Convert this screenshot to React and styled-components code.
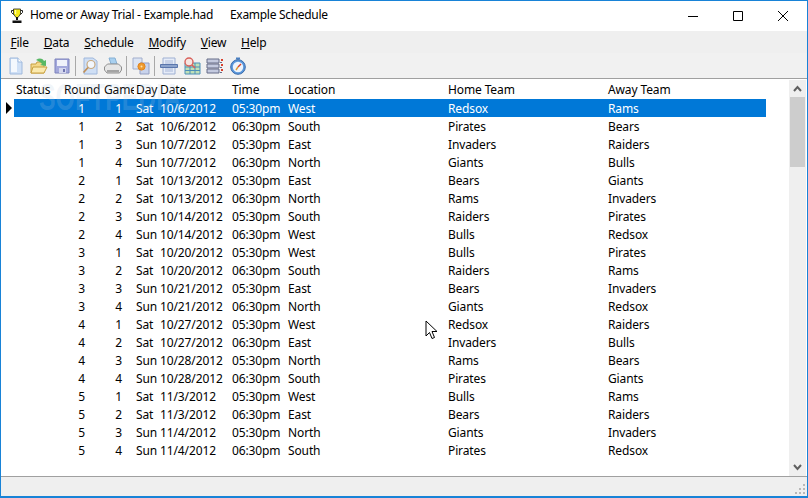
import React from 'react';
import styled, { createGlobalStyle } from 'styled-components';

const GlobalStyle = createGlobalStyle`
  html, body {
    margin: 0;
    padding: 0;
    background: #fff;
  }
  body {
    font-family: "Noto Sans", "Open Sans", sans-serif;
    font-size: 12px;
    color: #000;
    overflow: hidden;
  }
`;

const Window = styled.div`
  box-sizing: border-box;
  position: relative;
  width: 808px;
  height: 498px;
  display: flex;
  flex-direction: column;
  border: 1px solid #1883d7;
  border-width: 1px 1px 2px 1px;
  background: #f0f0f0;
  overflow: hidden;
`;

const TitleBar = styled.div`
  height: 30px;
  display: flex;
  align-items: center;
  padding-right: 2px;
  background: #fff;
  flex: none;
`;

const AppIcon = styled.svg`
  width: 16px;
  height: 16px;
  margin: 0 5px 0 8px;
  flex: none;
`;

const TitleText = styled.span`
  width: 200px;
  font-size: 12px;
  letter-spacing: -0.3px;
  line-height: 16px;
  margin-top: -2px;
  white-space: nowrap;
`;

const TitleSpacer = styled.div`
  flex: 1;
`;

const WinButton = styled.div`
  width: 45px;
  height: 30px;
  display: flex;
  align-items: center;
  justify-content: center;
`;

const MenuBar = styled.div`
  height: 22px;
  display: flex;
  align-items: center;
  padding-left: 2px;
  background: #efefef;
  flex: none;
`;

const MenuItem = styled.span`
  padding: 0 7.5px;
  font-size: 12px;
  letter-spacing: -0.25px;
`;

const ToolBar = styled.div`
  height: 25px;
  display: flex;
  align-items: center;
  padding-left: 3px;
  background: #f1f1f1;
  flex: none;
`;

const ToolButton = styled.div`
  width: 23px;
  height: 22px;
  display: flex;
  align-items: center;
  justify-content: center;
  svg {
    width: 18px;
    height: 18px;
  }
`;

const ToolSep = styled.div`
  width: 1px;
  height: 20px;
  background: #a8a8a8;
  margin: 0 ${(p) => p.$gap || 2}px;
`;

const Main = styled.div`
  flex: 1;
  min-height: 0;
  display: flex;
  position: relative;
  background: #fff;
  border-top: 1px solid #a0a0a0;
  border-bottom: 1px solid #a0a0a0;
`;

const Grid = styled.div`
  flex: 1;
  min-width: 0;
  padding-top: 1px;
`;

const Row = styled.div`
  display: flex;
  height: ${(p) => (p.$header ? 19 : 18)}px;
  align-items: stretch;
`;

const Gutter = styled.div`
  width: 13px;
  flex: none;
  display: flex;
  align-items: center;
  padding-left: 5px;
  box-sizing: border-box;
`;

const Cells = styled.div`
  width: 752px;
  display: grid;
  grid-template-columns: 48px 40px 32px 24px 72px 56px 160px 160px 160px;
  align-items: center;
  background: ${(p) => (p.$selected ? '#0078d7' : 'transparent')};
  color: ${(p) => (p.$selected ? '#fff' : '#000')};
  font-size: 12px;
  letter-spacing: -0.12px;
`;

const Cell = styled.div`
  padding-left: 2px;
  padding-right: ${(p) => p.$pad || 0}px;
  text-align: ${(p) => (p.$right ? 'right' : 'left')};
  white-space: nowrap;
  overflow: ${(p) => (p.$clip ? 'hidden' : 'visible')};
`;

const ScrollBar = styled.div`
  width: 17px;
  margin-right: 1px;
  flex: none;
  display: flex;
  flex-direction: column;
  background: #efefef;
  margin-top: 1px;
`;

const ScrollArrow = styled.div`
  height: 17px;
  display: flex;
  align-items: center;
  justify-content: center;
  flex: none;
`;

const ScrollTrack = styled.div`
  flex: 1;
  padding: 0 1px;
`;

const ScrollThumb = styled.div`
  height: 70px;
  background: #cdcdcd;
`;

const StatusBar = styled.div`
  height: 19px;
  flex: none;
  display: flex;
  justify-content: flex-end;
  align-items: flex-end;
  background: #efefef;
`;

const Grip = styled.svg`
  width: 12px;
  height: 12px;
  margin: 0 1px 1px 0;
`;

const Watermark = styled.div`
  position: absolute;
  left: 38px;
  top: 1px;
  font-family: "Liberation Sans", sans-serif;
  font-weight: 700;
  font-size: 36px;
  line-height: 1;
  color: rgba(185, 205, 225, 0.2);
  transform: scaleX(0.69);
  transform-origin: left top;
  pointer-events: none;
  white-space: nowrap;
`;

const Pointer = styled.svg`
  position: absolute;
  left: 424px;
  top: 241px;
  width: 14px;
  height: 21px;
`;

const Trophy = () => (
  <AppIcon viewBox="0 0 16 16">
    <path d="M2.5 2.5h3v4h-1l-2-2zM13.5 2.5h-3v4h1l2-2z" fill="none" stroke="#222" />
    <path d="M4.5 1h7v5L9 9.5H7L4.5 6z" fill="#f5ea1a" stroke="#222" strokeWidth="0.8" />
    <path d="M7 9h2v3H7z" fill="#111" />
    <path d="M3.5 12.5h9V15h-9z" fill="#111" />
    <path d="M6 2h1.2v4H6z" fill="#fffbb0" />
  </AppIcon>
);

const NewIcon = () => (
  <svg viewBox="0 0 18 18">
    <path d="M3 1h8l4 4v12H3z" fill="#cfe0f6" stroke="#9fb9dc" />
    <path d="M11 1v4h4" fill="#fff" stroke="#9fb9dc" />
    <path d="M4 2h6v13H4z" fill="#f4f8fd" />
  </svg>
);

const OpenIcon = () => (
  <svg viewBox="0 0 18 18">
    <path d="M1 7h5l1-2h7v11H1z" fill="#f4d98a" stroke="#c8a040" />
    <path d="M1 16l2-6h14l-3 6z" fill="#fbeaae" stroke="#c8a040" />
    <path d="M6 3c3-2 6-2 8 1l2-1v6l-6-1 2-1c-1-2-4-3-6-4z" fill="#58b864" />
  </svg>
);

const SaveIcon = () => (
  <svg viewBox="0 0 18 18">
    <path d="M2 2h14v14H2z" fill="#a4a9dc" stroke="#7c82bc" />
    <path d="M4 3h10v6H4z" fill="#f0f2fa" />
    <path d="M6 11h7v5H6z" fill="#d4d7ee" />
    <path d="M10 12h2v3h-2z" fill="#6f75b0" />
  </svg>
);

const PreviewIcon = () => (
  <svg viewBox="0 0 18 18">
    <path d="M3 1h9l4 3v13H3z" fill="#cfdff5" stroke="#a0b8dc" />
    <circle cx="10" cy="7.5" r="4" fill="#f2f7fd" stroke="#c8aa80" strokeWidth="1.2" />
    <path d="M7 10.5L2.5 15.5" stroke="#c09058" strokeWidth="1.8" />
  </svg>
);

const PrintIcon = () => (
  <svg viewBox="0 0 18 18">
    <path d="M5 1h6l2 6H7z" fill="#a8d0f0" stroke="#86b0d4" />
    <path d="M0.5 10l3-3h11l3 3v3l-2 3H3l-2.5-3z" fill="#e6e6e6" stroke="#8f8f8f" />
    <path d="M3 13h12v2.5H3z" fill="#a4a4a4" />
  </svg>
);

const CopyIcon = () => (
  <svg viewBox="0 0 18 18">
    <path d="M1 1h9v11H1z" fill="#dbe4f4" stroke="#a2aecc" />
    <path d="M8 6h9v11H8z" fill="#c8d3ec" stroke="#949fc2" />
    <circle cx="9.5" cy="9.5" r="3.6" fill="#ef9a2c" stroke="#e08420" />
    <circle cx="9.5" cy="9.5" r="1" fill="#fde2ae" />
  </svg>
);

const RowsIcon = () => (
  <svg viewBox="0 0 18 18">
    <path d="M3 1h12v16H3z" fill="#e6ecf8" stroke="#9fb0d2" />
    <path d="M5 4h8M5 6h8M5 12h8M5 14h8" stroke="#a9b8d8" />
    <path d="M0.5 7.5h17v3H0.5z" fill="#8ca3cc" stroke="#5a76ac" />
  </svg>
);

const FindIcon = () => (
  <svg viewBox="0 0 18 18">
    <path d="M2 6h15v11H2z" fill="#bfe0b8" stroke="#4c8fb8" />
    <path d="M2 10h15M2 13.5h15M7 6v11M12 6v11" stroke="#4c8fb8" />
    <circle cx="6" cy="5" r="4" fill="#f6e6e2" stroke="#d8605a" strokeWidth="1.4" />
    <path d="M9 8l3 3" stroke="#d8605a" strokeWidth="1.6" />
  </svg>
);

const ListIcon = () => (
  <svg viewBox="0 0 18 18">
    <path d="M1 2h12v4H1zM1 7h12v4H1zM1 12h12v4H1z" fill="#c4cadf" stroke="#666c88" />
    <path d="M15 2h2v2h-2zM15 7h2v2h-2zM15 12h2v2h-2z" fill="#d8402c" />
    <path d="M14 5h2v1h-2zM14 10h2v1h-2zM14 15h2v1h-2z" fill="#666c88" />
  </svg>
);

const TimerIcon = () => (
  <svg viewBox="0 0 18 18">
    <path d="M7 0.5h4v2H7z" fill="#4a7fc0" />
    <circle cx="9" cy="10" r="7.3" fill="#5c98dc" stroke="#3a6cac" />
    <circle cx="9" cy="10" r="5.2" fill="#eef4fb" />
    <path d="M9 10l3-3" stroke="#d8402c" strokeWidth="1.4" />
    <path d="M9 10l-2 3" stroke="#e09a30" strokeWidth="1.4" />
  </svg>
);

const headers = ['Status', 'Round', 'Game', 'Day', 'Date', 'Time', 'Location', 'Home Team', 'Away Team'];

const fixtures = [
  [1, 1, 'Sat', '10/6/2012', '05:30pm', 'West', 'Redsox', 'Rams'],
  [1, 2, 'Sat', '10/6/2012', '06:30pm', 'South', 'Pirates', 'Bears'],
  [1, 3, 'Sun', '10/7/2012', '05:30pm', 'East', 'Invaders', 'Raiders'],
  [1, 4, 'Sun', '10/7/2012', '06:30pm', 'North', 'Giants', 'Bulls'],
  [2, 1, 'Sat', '10/13/2012', '05:30pm', 'East', 'Bears', 'Giants'],
  [2, 2, 'Sat', '10/13/2012', '06:30pm', 'North', 'Rams', 'Invaders'],
  [2, 3, 'Sun', '10/14/2012', '05:30pm', 'South', 'Raiders', 'Pirates'],
  [2, 4, 'Sun', '10/14/2012', '06:30pm', 'West', 'Bulls', 'Redsox'],
  [3, 1, 'Sat', '10/20/2012', '05:30pm', 'West', 'Bulls', 'Pirates'],
  [3, 2, 'Sat', '10/20/2012', '06:30pm', 'South', 'Raiders', 'Rams'],
  [3, 3, 'Sun', '10/21/2012', '05:30pm', 'East', 'Bears', 'Invaders'],
  [3, 4, 'Sun', '10/21/2012', '06:30pm', 'North', 'Giants', 'Redsox'],
  [4, 1, 'Sat', '10/27/2012', '05:30pm', 'West', 'Redsox', 'Raiders'],
  [4, 2, 'Sat', '10/27/2012', '06:30pm', 'East', 'Invaders', 'Bulls'],
  [4, 3, 'Sun', '10/28/2012', '05:30pm', 'North', 'Rams', 'Bears'],
  [4, 4, 'Sun', '10/28/2012', '06:30pm', 'South', 'Pirates', 'Giants'],
  [5, 1, 'Sat', '11/3/2012', '05:30pm', 'West', 'Bulls', 'Rams'],
  [5, 2, 'Sat', '11/3/2012', '06:30pm', 'East', 'Bears', 'Raiders'],
  [5, 3, 'Sun', '11/4/2012', '05:30pm', 'North', 'Giants', 'Invaders'],
  [5, 4, 'Sun', '11/4/2012', '06:30pm', 'South', 'Pirates', 'Redsox'],
];

const menus = ['File', 'Data', 'Schedule', 'Modify', 'View', 'Help'];

const App = () => (
  <>
    <GlobalStyle />
    <Window>
      <TitleBar>
        <Trophy />
        <TitleText>Home or Away Trial - Example.had</TitleText>
        <TitleText>Example Schedule</TitleText>
        <TitleSpacer />
        <WinButton>
          <svg width="10" height="10" viewBox="0 0 10 10"><path d="M0 5.5h10" stroke="#000" /></svg>
        </WinButton>
        <WinButton>
          <svg width="10" height="10" viewBox="0 0 10 10"><path d="M.5.5h9v9h-9z" fill="none" stroke="#000" /></svg>
        </WinButton>
        <WinButton>
          <svg width="10" height="10" viewBox="0 0 10 10"><path d="M0 0l10 10M10 0L0 10" stroke="#000" /></svg>
        </WinButton>
      </TitleBar>
      <MenuBar>
        {menus.map((m) => (
          <MenuItem key={m}><u>{m[0]}</u>{m.slice(1)}</MenuItem>
        ))}
      </MenuBar>
      <ToolBar>
        <ToolButton><NewIcon /></ToolButton>
        <ToolButton><OpenIcon /></ToolButton>
        <ToolButton><SaveIcon /></ToolButton>
        <ToolSep $gap={2} />
        <ToolButton><PreviewIcon /></ToolButton>
        <ToolButton><PrintIcon /></ToolButton>
        <ToolSep $gap={2} />
        <ToolButton><CopyIcon /></ToolButton>
        <ToolSep $gap={2} />
        <ToolButton><RowsIcon /></ToolButton>
        <ToolButton><FindIcon /></ToolButton>
        <ToolButton><ListIcon /></ToolButton>
        <ToolButton><TimerIcon /></ToolButton>
      </ToolBar>
      <Main>
        <Grid>
          <Row $header>
            <Gutter />
            <Cells>
              {headers.map((h) => (
                <Cell key={h} $clip={h === 'Game'}>{h}</Cell>
              ))}
            </Cells>
          </Row>
          {fixtures.map(([round, game, day, date, time, location, home, away], i) => (
            <Row key={`${round}-${game}`}>
              <Gutter>
                {i === 0 && (
                  <svg width="6" height="12" viewBox="0 0 6 12"><path d="M0 0l6 6-6 6z" fill="#000" /></svg>
                )}
              </Gutter>
              <Cells $selected={i === 0}>
                <Cell />
                <Cell $right $pad={17}>{round}</Cell>
                <Cell $right $pad={12}>{game}</Cell>
                <Cell>{day}</Cell>
                <Cell>{date}</Cell>
                <Cell>{time}</Cell>
                <Cell>{location}</Cell>
                <Cell>{home}</Cell>
                <Cell>{away}</Cell>
              </Cells>
            </Row>
          ))}
        </Grid>
        <ScrollBar>
          <ScrollArrow>
            <svg width="9" height="7" viewBox="0 0 9 7"><path d="M1 6l3.5-4L8 6" fill="none" stroke="#606060" strokeWidth="2" /></svg>
          </ScrollArrow>
          <ScrollTrack><ScrollThumb /></ScrollTrack>
          <ScrollArrow>
            <svg width="9" height="7" viewBox="0 0 9 7"><path d="M1 1l3.5 4L8 1" fill="none" stroke="#606060" strokeWidth="2" /></svg>
          </ScrollArrow>
        </ScrollBar>
        <Watermark>SOFTPEDIA</Watermark>
        <Pointer viewBox="0 0 14 21">
          <path d="M1 1v15l3.5-3.5 2.5 6 2.5-1-2.5-6H12z" fill="#fff" stroke="#000" />
        </Pointer>
      </Main>
      <StatusBar>
        <Grip viewBox="0 0 12 12">
          <path d="M9 1h2v2H9zM5 5h2v2H5zM9 5h2v2H9zM1 9h2v2H1zM5 9h2v2H5zM9 9h2v2H9z" fill="#b8b8b8" />
        </Grip>
      </StatusBar>
    </Window>
  </>
);

export default App;
